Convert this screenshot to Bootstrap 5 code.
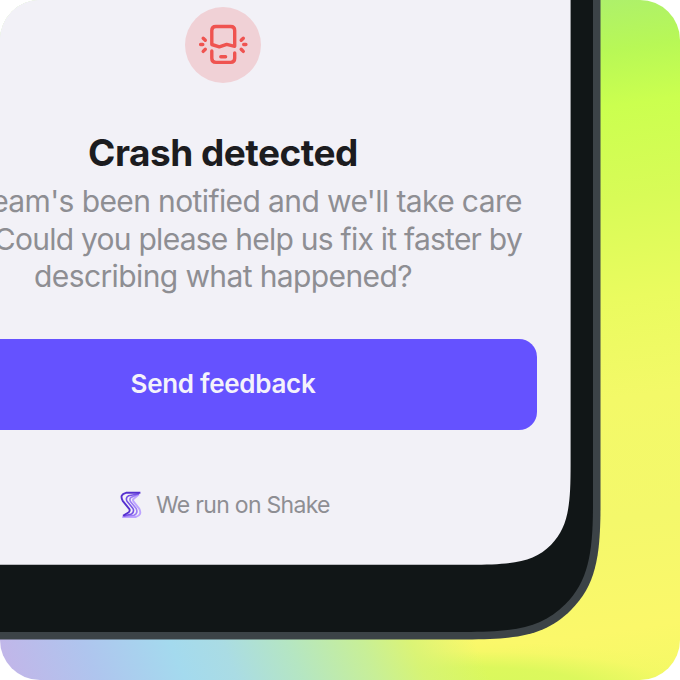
<!DOCTYPE html>
<html lang="en">
<head>
<meta charset="utf-8">
<meta name="viewport" content="width=device-width, initial-scale=1">
<title>Crash detected</title>
<link href="https://cdn.jsdelivr.net/npm/bootstrap@5.3.0/dist/css/bootstrap.min.css" rel="stylesheet">
<style>
  body { font-family: Inter, "Open Sans", sans-serif; background: #fff; }
  .stage {
    width: 680px; height: 680px; border-radius: 40px;
    background:
      linear-gradient(68deg, #c4b4e8 0, #afc5ee 90px, #a4daee 172px, #aadce4 220px, #b5e6c2 282px, #c8ef97 350px, rgba(214,243,120,.85) 395px, rgba(235,246,108,0) 455px) 0 600px / 600px 80px no-repeat,
      radial-gradient(250px 46px at 475px 688px, #d8f85c 0, rgba(219,248,92,.95) 45%, rgba(240,248,100,.4) 80%, rgba(251,248,106,0) 100%),
      linear-gradient(172deg, #adf06c 80px, #b8f856 135px, #cbff4f 190px, #d8fb57 282px, #eafb5f 382px, #f3f968 480px, #f4f86b 600px, #fbf86a 710px, #f4f965 768px);
  }
  .phone { width: 601px; height: 640px; background: linear-gradient(135deg, #f2f1f7 80px, #3c4347 80px);
    clip-path: path("M0 0H600.5V505C600.5 556 596 585 571 610C546 635 519 639.4 466 639.4H0Z"); }
  .bezel { width: 593px; height: 632px; background: linear-gradient(135deg, #f2f1f7 80px, #111617 80px);
    clip-path: path("M0 0H593V503C593 551 589 580.6 565.3 604.3C541.6 628 515 632 464 632H0Z"); }
  .screen { width: 571px; height: 565px; background: #f2f1f7; padding-right: 34px;
    clip-path: path("M0 0H570.6V465C570.6 503 569 526.8 550.9 545C534 562 513 564.7 470 564.7H0Z"); }
  .panel { width: 446px; }
  .crash-icon { width: 76px; height: 76px; margin-top: 7px; background: #f0d1d6; }
  .crash-title { margin: 48px 0 0; font-size: 37px; line-height: 44px; font-weight: 650; color: #1c1c1f; letter-spacing: -.5px; }
  .copy { margin-top: 8px; font-size: 30px; line-height: 37.7px; color: #8e8e93; width: 522px; letter-spacing: -.61px; }
  .copy .l2 { letter-spacing: -.75px; }
  .send { width: 537px; height: 91px; margin-top: 43px; border: 0; border-radius: 0 18px 18px 0; background: #6552ff; color: #f4f2fb; font-size: 26px; font-weight: 600; letter-spacing: -.3px; padding: 0 91px 2px 0; }
  .send:hover { background: #5a47f2; color: #f4f2fb; }
  .runner { margin: 58px 0 0 120px; gap: 14px; height: 34px; font-size: 23px; letter-spacing: -.7px; color: #8e8e93; }
</style>
</head>
<body>
<main class="stage overflow-hidden">
  <div class="phone">
    <div class="bezel">
      <section class="screen text-nowrap">
        <div class="panel d-flex flex-column align-items-center float-start">
          <div class="crash-icon rounded-circle d-flex align-items-center justify-content-center">
            <svg width="76" height="76" viewBox="0 0 76 76" fill="none" stroke="#ef5350" stroke-width="3.4" stroke-linecap="round" stroke-linejoin="round" aria-hidden="true">
              <path d="M26.8 37V23.6Q26.8 19.5 30.9 19.5H45.6Q49.7 19.5 49.7 23.6V39.3L41.7 37.4L34.3 39.8L26.8 37.5"/>
              <path d="M26.8 44V51.3Q26.8 55.4 30.9 55.4H45.6Q49.7 55.4 49.7 51.3V46M35.8 49.8H40.6"/>
              <path d="M18.2 31.2L20.3 33.3M15.6 37.5H17.8M18.2 44.4L20.3 42.3M58.3 31.2L56.2 33.3M58.7 37.5H60.9M58.3 44.4L56.2 42.3"/>
            </svg>
          </div>
          <h1 class="crash-title">Crash detected</h1>
        </div>
        <div class="clearfix"></div>
        <div class="copy">
          <div class="l1 d-flex justify-content-end"><span>team's been notified and we'll take care</span></div>
          <div class="l2 d-flex justify-content-end"><span>Could you please help us fix it faster by</span></div>
          <div class="l3 text-center panel"><span>describing what happened?</span></div>
        </div>
        <button type="button" class="send btn d-block">Send feedback</button>
        <div class="runner d-flex align-items-center">
          <svg width="22" height="28" viewBox="0 0 22 28" fill="none" stroke-linejoin="round" aria-hidden="true">
            <path d="M19 3.2L13.2 8.2Q12.6 9.3 13.6 10.6L19.2 17.6Q22.4 24 16 25.9H2.2" stroke="#bda4ff" stroke-width="2"/>
            <path d="M18.5 3L11 6.4Q9.2 8 10.4 10.4L16.2 17.6Q18.4 22 14 24.3L4 25.2" stroke="#9c7cf5" stroke-width="1.6"/>
            <path d="M19 2.8L8.6 4.7Q5.2 6.5 7 10.2L13 17.6Q14.6 20.8 11.5 23L3.5 25" stroke="#7652e6" stroke-width="1.6"/>
            <path d="M20.4 1.8H6Q-.8 3.6 2.7 9.8L9.2 17.8Q10.4 19.6 8.8 21.2L3 24.8" stroke="#5630cf" stroke-width="1.9"/>
          </svg>
          <span class="run-text">We run on Shake</span>
        </div>
      </section>
    </div>
  </div>
</main>
<script src="https://cdn.jsdelivr.net/npm/bootstrap@5.3.0/dist/js/bootstrap.bundle.min.js"></script>
</body>
</html>
